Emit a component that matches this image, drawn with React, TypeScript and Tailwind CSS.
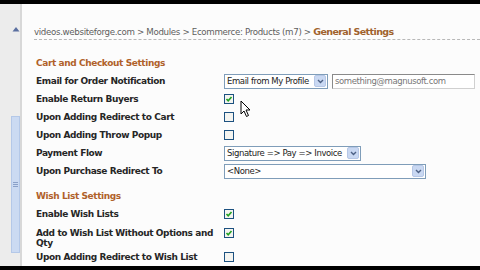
import React from 'react';

const font = { fontFamily: '"DejaVu Sans", Verdana, sans-serif' };

function Arrow() {
  return (
    <span className="flex h-[12px] w-[12px] shrink-0 items-center justify-center rounded-[2px] border border-[#b6c7e6] bg-[#c9d8f2]">
      <svg width="7" height="5" viewBox="0 0 7 5">
        <path d="M1 1 L3.5 3.5 L6 1" stroke="#4d6185" strokeWidth="1.4" fill="none" />
      </svg>
    </span>
  );
}

function Select({ value, width }: { value: string; width: string }) {
  return (
    <div className={`flex h-[15px] items-center justify-between border border-[#7f9db9] bg-white pl-[2px] pr-[1px] ${width}`}>
      <span className="whitespace-nowrap text-[8.5px] leading-none tracking-[-0.4px] text-[#222]">{value}</span>
      <Arrow />
    </div>
  );
}

function Check({ on }: { on?: boolean }) {
  return (
    <span className="flex h-[10px] w-[10px] items-center justify-center border border-[#1c5180] bg-[#f4f4f0]">
      {on && (
        <svg width="8" height="8" viewBox="0 0 8 8">
          <path d="M1.5 4 L3.2 5.8 L6.5 2" stroke="#21a121" strokeWidth="1.6" fill="none" />
        </svg>
      )}
    </span>
  );
}

function Row({ label, children, tall }: { label: React.ReactNode; children?: React.ReactNode; tall?: boolean }) {
  return (
    <div className={`flex ${tall ? 'h-[25px] items-start pt-[5px]' : 'h-[18px] items-center'}`}>
      <div className="w-[188px] whitespace-nowrap text-[9px] font-bold leading-[10px] tracking-[-0.4px] text-[#262626]">{label}</div>
      <div className="flex items-center gap-[4px]">{children}</div>
    </div>
  );
}

function Header({ children }: { children: React.ReactNode }) {
  return (
    <div className="flex h-[18px] items-center whitespace-nowrap text-[9px] font-bold tracking-[-0.4px] text-[#b0612a]">{children}</div>
  );
}

export default function App() {
  return (
    <div className="flex h-[270px] w-[480px] flex-col overflow-hidden bg-black" style={font}>
      <div className="h-[6px]" />
      <div className="flex flex-1 bg-[#fcfcfc]">
        <div className="flex w-[22px] border-r-2 border-[#d8d8d8] bg-[#ececec]">
          <div className="w-[11px]" />
          <div className="flex w-[9px] flex-col">
            <div className="mt-[20px] flex h-[10px] items-center justify-center">
              <svg width="8" height="6" viewBox="0 0 8 6">
                <path d="M0.5 5.5 L4 1 L7.5 5.5 Z" fill="#5a6fa0" />
              </svg>
            </div>
            <div className="mt-[82px] flex h-[137px] flex-col items-center justify-center border border-[#b4c8e8] bg-[#cbdaf2]">
              <div className="h-[1px] w-[5px] bg-[#8aa0c8]" />
              <div className="mt-[1px] h-[1px] w-[5px] bg-[#8aa0c8]" />
              <div className="mt-[1px] h-[1px] w-[5px] bg-[#8aa0c8]" />
            </div>
          </div>
        </div>
        <div className="relative flex-1 pl-[12px]">
          <div className="mt-[21px] flex h-[15px] items-center whitespace-nowrap border-b border-dashed border-[#b8b8b8] text-[8.7px] tracking-[-0.35px] text-[#5e5e5e]">
            videos.websiteforge.com &gt; Modules &gt; Ecommerce: Products (m7) &gt;&nbsp;
            <span className="text-[9.5px] font-bold tracking-[-0.6px] text-[#a0622d]">General Settings</span>
          </div>
          <div className="mt-[14px] pl-[2px]">
            <Header>Cart and Checkout Settings</Header>
            <Row label="Email for Order Notification">
              <Select value="Email from My Profile" width="w-[104px]" />
              <div className="flex h-[15px] w-[143px] items-center whitespace-nowrap border border-[#8a8a8a] border-b-[#d0d0d0] border-r-[#d0d0d0] bg-white pl-[2px] text-[8.5px] tracking-[-0.4px] text-[#777]">
                something@magnusoft.com
              </div>
            </Row>
            <Row label="Enable Return Buyers">
              <Check on />
            </Row>
            <Row label="Upon Adding Redirect to Cart">
              <Check />
            </Row>
            <Row label="Upon Adding Throw Popup">
              <Check />
            </Row>
            <Row label="Payment Flow">
              <Select value="Signature => Pay => Invoice" width="w-[137px]" />
            </Row>
            <Row label="Upon Purchase Redirect To">
              <Select value="<None>" width="w-[202px]" />
            </Row>
            <div className="h-[7px]" />
            <Header>Wish List Settings</Header>
            <Row label="Enable Wish Lists">
              <Check on />
            </Row>
            <Row tall label={<span>Add to Wish List Without Options and<br />Qty</span>}>
              <Check on />
            </Row>
            <Row label="Upon Adding Redirect to Wish List">
              <Check />
            </Row>
          </div>
          <svg className="absolute left-[218px] top-[96px]" width="12" height="18" viewBox="0 0 12 18">
            <path d="M1 1 L1 14 L4 11 L6.5 16.5 L8.5 15.5 L6 10 L10 10 Z" fill="white" stroke="black" strokeWidth="1" />
          </svg>
        </div>
      </div>
      <div className="h-[5px]" />
    </div>
  );
}
